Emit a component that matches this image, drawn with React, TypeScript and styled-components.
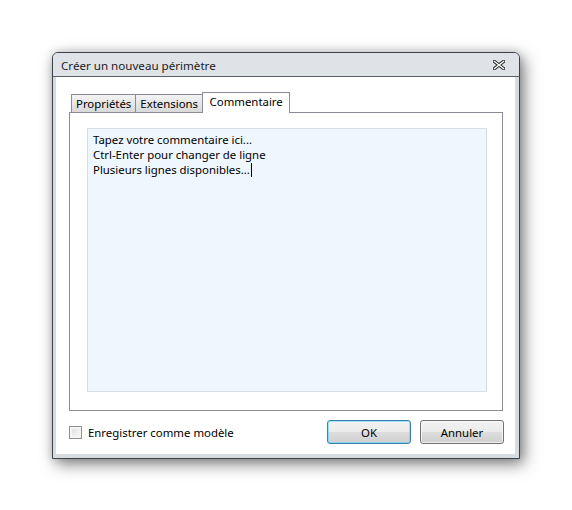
import React from "react";
import styled, { createGlobalStyle } from "styled-components";

const GlobalStyle = createGlobalStyle`
  html, body {
    margin: 0;
    padding: 0;
    background: #ffffff;
  }
  body {
    font-family: "Noto Sans", "Open Sans", sans-serif;
    font-size: 11.4px;
    color: #000;
  }
`;

const Page = styled.div`
  width: 572px;
  height: 510px;
  padding: 52px 0 0 52px;
  box-sizing: border-box;
`;

const Window = styled.div`
  width: 468px;
  height: 407px;
  box-sizing: border-box;
  border: 1px solid #3d4249;
  border-radius: 6px 6px 0 0;
  background: #d9dee3;
  box-shadow: 4px 5px 16px rgba(0, 0, 0, 0.5), 0 0 8px rgba(0, 0, 0, 0.15);
  display: flex;
  flex-direction: column;
`;

const TitleBar = styled.div`
  height: 23px;
  display: flex;
  align-items: center;
  justify-content: space-between;
  padding: 0 14px 0 8px;
  background: #dfe3e8;
  border-radius: 5px 5px 0 0;
  border-bottom: 1px solid #5a6068;
`;

const Title = styled.span`
  font-size: 11.6px;
  color: #1b1b1b;
  padding-top: 1px;
`;

const Frame = styled.div`
  flex: 1;
  display: flex;
  padding: 0 4px 4px 3px;
  background: #d7dce1;
`;

const Client = styled.div`
  flex: 1;
  background: #ffffff;
  display: flex;
  flex-direction: column;
  padding: 15px 12px 0 13px;
`;

const TabRow = styled.div`
  display: flex;
  align-items: flex-end;
  padding-left: 2px;
  height: 20px;
`;

const Tab = styled.div<{ $active?: boolean }>`
  position: relative;
  z-index: ${(p) => (p.$active ? 2 : 1)};
  height: ${(p) => (p.$active ? "21px" : "18px")};
  margin-bottom: ${(p) => (p.$active ? "-1px" : "0")};
  margin-left: -1px;
  &:first-child {
    margin-left: 0;
  }
  padding: 0 ${(p) => (p.$active ? "6.5px" : "4px")};
  padding-top: ${(p) => (p.$active ? "1px" : "0")};
  box-sizing: border-box;
  display: flex;
  align-items: ${(p) => (p.$active ? "flex-start" : "center")};
  border: 1px solid #898c95;
  border-bottom: none;
  background: ${(p) =>
    p.$active ? "#ffffff" : "linear-gradient(#f3f3f3, #e6e6e6 50%, #d9d9d9)"};
  color: #000;
  font-size: 11.4px;
  white-space: nowrap;
`;

const Panel = styled.div`
  height: 299px;
  box-sizing: border-box;
  border: 1px solid #898c95;
  padding: 15px 15px 18px 17px;
  display: flex;
`;

const TextArea = styled.div`
  flex: 1;
  background: #eef6fe;
  border: 1px solid #d6dde5;
  padding: 3px 5px;
  line-height: 15px;
  font-size: 11.4px;
  color: #000;
`;

const Caret = styled.span`
  display: inline-block;
  width: 0;
  height: 14px;
  margin-left: 1px;
  border-left: 1px solid #000;
  vertical-align: -3px;
`;

const Footer = styled.div`
  display: flex;
  align-items: center;
  justify-content: space-between;
  margin-top: 9px;
`;

const CheckLabel = styled.label`
  display: flex;
  align-items: center;
  gap: 6px;
  font-size: 11.4px;
`;

const CheckBox = styled.span`
  width: 13px;
  height: 13px;
  box-sizing: border-box;
  border: 1px solid #8f8f8f;
  background: linear-gradient(135deg, #dcdcdc, #fbfbfb);
  box-shadow: inset 0 0 0 2px #f4f4f4;
`;

const Buttons = styled.div`
  display: flex;
  gap: 9px;
  margin-right: -1px;
`;

const Button = styled.button<{ $focused?: boolean }>`
  width: 84px;
  height: 24px;
  font-family: inherit;
  font-size: 11.4px;
  color: #000;
  border-radius: 3px;
  border: 1px solid ${(p) => (p.$focused ? "#3c7fb1" : "#707070")};
  background: linear-gradient(#f2f2f2, #ebebeb 50%, #dddddd 50%, #cfcfcf);
  box-shadow: inset 0 0 0 1px
    ${(p) => (p.$focused ? "rgba(72, 216, 251, 0.55)" : "rgba(255, 255, 255, 0.7)")};
  padding: 0;
`;

const CloseIcon = () => (
  <svg width="12" height="10" viewBox="0 0 12 10">
    <path d="M1.5 1.5 L10.5 8.5 M10.5 1.5 L1.5 8.5" stroke="#2d2d2d" strokeWidth="3.4" strokeLinecap="square" />
    <path d="M1.5 1.5 L10.5 8.5 M10.5 1.5 L1.5 8.5" stroke="#ffffff" strokeWidth="1.4" strokeLinecap="square" />
  </svg>
);

export default function App() {
  return (
    <Page>
      <GlobalStyle />
      <Window>
        <TitleBar>
          <Title>Créer un nouveau périmètre</Title>
          <CloseIcon />
        </TitleBar>
        <Frame>
          <Client>
            <TabRow>
              <Tab>Propriétés</Tab>
              <Tab>Extensions</Tab>
              <Tab $active>Commentaire</Tab>
            </TabRow>
            <Panel>
              <TextArea>
                Tapez votre commentaire ici...
                <br />
                Ctrl-Enter pour changer de ligne
                <br />
                Plusieurs lignes disponibles...
                <Caret />
              </TextArea>
            </Panel>
            <Footer>
              <CheckLabel>
                <CheckBox />
                Enregistrer comme modèle
              </CheckLabel>
              <Buttons>
                <Button $focused>OK</Button>
                <Button>Annuler</Button>
              </Buttons>
            </Footer>
          </Client>
        </Frame>
      </Window>
    </Page>
  );
}
